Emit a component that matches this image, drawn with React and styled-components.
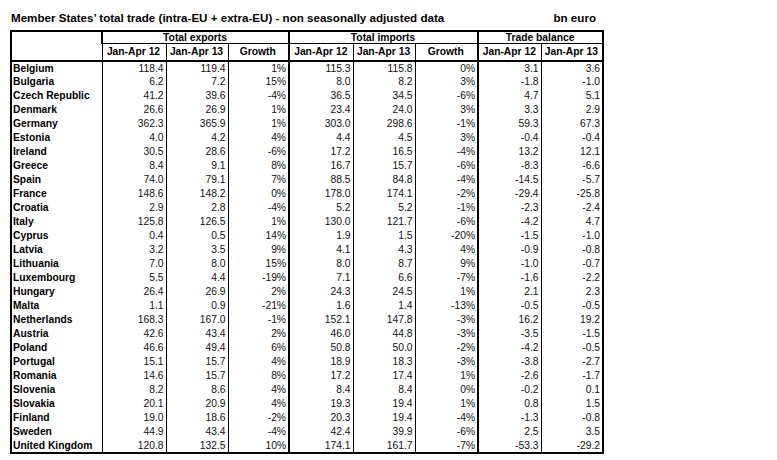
import React from 'react';
import styled, {createGlobalStyle} from "styled-components";

const GlobalStyle = createGlobalStyle`
  html, body {
    margin: 0;
    padding: 0;
    background: #fff;
  }
`

const rows = [
    ['Belgium', '118.4', '119.4', '1%', '115.3', '115.8', '0%', '3.1', '3.6'],
    ['Bulgaria', '6.2', '7.2', '15%', '8.0', '8.2', '3%', '-1.8', '-1.0'],
    ['Czech Republic', '41.2', '39.6', '-4%', '36.5', '34.5', '-6%', '4.7', '5.1'],
    ['Denmark', '26.6', '26.9', '1%', '23.4', '24.0', '3%', '3.3', '2.9'],
    ['Germany', '362.3', '365.9', '1%', '303.0', '298.6', '-1%', '59.3', '67.3'],
    ['Estonia', '4.0', '4.2', '4%', '4.4', '4.5', '3%', '-0.4', '-0.4'],
    ['Ireland', '30.5', '28.6', '-6%', '17.2', '16.5', '-4%', '13.2', '12.1'],
    ['Greece', '8.4', '9.1', '8%', '16.7', '15.7', '-6%', '-8.3', '-6.6'],
    ['Spain', '74.0', '79.1', '7%', '88.5', '84.8', '-4%', '-14.5', '-5.7'],
    ['France', '148.6', '148.2', '0%', '178.0', '174.1', '-2%', '-29.4', '-25.8'],
    ['Croatia', '2.9', '2.8', '-4%', '5.2', '5.2', '-1%', '-2.3', '-2.4'],
    ['Italy', '125.8', '126.5', '1%', '130.0', '121.7', '-6%', '-4.2', '4.7'],
    ['Cyprus', '0.4', '0.5', '14%', '1.9', '1.5', '-20%', '-1.5', '-1.0'],
    ['Latvia', '3.2', '3.5', '9%', '4.1', '4.3', '4%', '-0.9', '-0.8'],
    ['Lithuania', '7.0', '8.0', '15%', '8.0', '8.7', '9%', '-1.0', '-0.7'],
    ['Luxembourg', '5.5', '4.4', '-19%', '7.1', '6.6', '-7%', '-1.6', '-2.2'],
    ['Hungary', '26.4', '26.9', '2%', '24.3', '24.5', '1%', '2.1', '2.3'],
    ['Malta', '1.1', '0.9', '-21%', '1.6', '1.4', '-13%', '-0.5', '-0.5'],
    ['Netherlands', '168.3', '167.0', '-1%', '152.1', '147.8', '-3%', '16.2', '19.2'],
    ['Austria', '42.6', '43.4', '2%', '46.0', '44.8', '-3%', '-3.5', '-1.5'],
    ['Poland', '46.6', '49.4', '6%', '50.8', '50.0', '-2%', '-4.2', '-0.5'],
    ['Portugal', '15.1', '15.7', '4%', '18.9', '18.3', '-3%', '-3.8', '-2.7'],
    ['Romania', '14.6', '15.7', '8%', '17.2', '17.4', '1%', '-2.6', '-1.7'],
    ['Slovenia', '8.2', '8.6', '4%', '8.4', '8.4', '0%', '-0.2', '0.1'],
    ['Slovakia', '20.1', '20.9', '4%', '19.3', '19.4', '1%', '0.8', '1.5'],
    ['Finland', '19.0', '18.6', '-2%', '20.3', '19.4', '-4%', '-1.3', '-0.8'],
    ['Sweden', '44.9', '43.4', '-4%', '42.4', '39.9', '-6%', '2.5', '3.5'],
    ['United Kingdom', '120.8', '132.5', '10%', '174.1', '161.7', '-7%', '-53.3', '-29.2'],
];

const widths = [91, 64, 62, 61, 64, 62, 63, 63, 62];

// columns that close a group get the heavy rule
const groupEnd = [3, 6];

const TradeTable = () => {
    return (
        <Page>
            <GlobalStyle/>

            <TitleRow>
                <Title>Member States’ total trade (intra-EU + extra-EU) - non seasonally adjusted data</Title>
                <Title>bn euro</Title>
            </TitleRow>

            <Table>
                <colgroup>
                    {widths.map((w, i) => <col key={i} style={{width: w}}/>)}
                </colgroup>
                <thead>
                <GroupRow>
                    <CornerCell rowSpan={2}/>
                    <GroupCell colSpan={3}>Total exports</GroupCell>
                    <GroupCell colSpan={3}>Total imports</GroupCell>
                    <GroupCell colSpan={2}>Trade balance</GroupCell>
                </GroupRow>
                <SubRow>
                    <SubCell>Jan-Apr 12</SubCell>
                    <SubCell>Jan-Apr 13</SubCell>
                    <SubCell $heavy>Growth</SubCell>
                    <SubCell>Jan-Apr 12</SubCell>
                    <SubCell>Jan-Apr 13</SubCell>
                    <SubCell $heavy>Growth</SubCell>
                    <SubCell>Jan-Apr 12</SubCell>
                    <SubCell>Jan-Apr 13</SubCell>
                </SubRow>
                </thead>
                <tbody>
                {rows.map(([country, ...values]) => (
                    <DataRow key={country}>
                        <Country>{country}</Country>
                        {values.map((v, i) => (
                            <Value key={i} $heavy={groupEnd.includes(i + 1)}>{v}</Value>
                        ))}
                    </DataRow>
                ))}
                </tbody>
            </Table>
        </Page>
    );
};

const Page = styled.div`
  padding: 11px 0 0 10px;
  font-family: 'Liberation Sans', Arial, sans-serif;
  color: #000;
`

const TitleRow = styled.div`
  display: flex;
  justify-content: space-between;
  width: 585px;
  padding-left: 1px;
  margin-bottom: 5px;
`

const Title = styled.div`
  font-size: 11.6px;
  line-height: 14px;
  font-weight: bold;
  white-space: nowrap;
`

const Table = styled.table`
  border-collapse: collapse;
  table-layout: fixed;
  width: 594px;
  border: 2px solid #000;
  font-size: 10.3px;

  th, td {
    padding: 0 2px 0 1px;
    white-space: nowrap;
    overflow: hidden;
  }
`

const GroupRow = styled.tr`
  height: 11px;
  line-height: 11px;
`

const SubRow = styled.tr`
  height: 17px;
  line-height: 15px;
`

const CornerCell = styled.th`
  border-right: 1px solid #000;
  border-bottom: 2px solid #000;
`

const GroupCell = styled.th`
  font-weight: bold;
  text-align: center;
  border-left: 2px solid #000;
  border-right: 2px solid #000;
  border-bottom: 1px solid #000;
`

const SubCell = styled.th`
  font-weight: bold;
  text-align: center;
  border-right: ${p => p.$heavy ? '2px' : '1px'} solid #000;
  border-bottom: 2px solid #000;
`

const DataRow = styled.tr`
  height: 14px;
  line-height: 13px;
`

const Country = styled.td`
  font-weight: bold;
  text-align: left;
  border-right: 1px solid #000;
`

const Value = styled.td`
  text-align: right;
  color: #111;
  border-right: ${p => p.$heavy ? '2px' : '1px'} solid #000;
`

export default TradeTable;
